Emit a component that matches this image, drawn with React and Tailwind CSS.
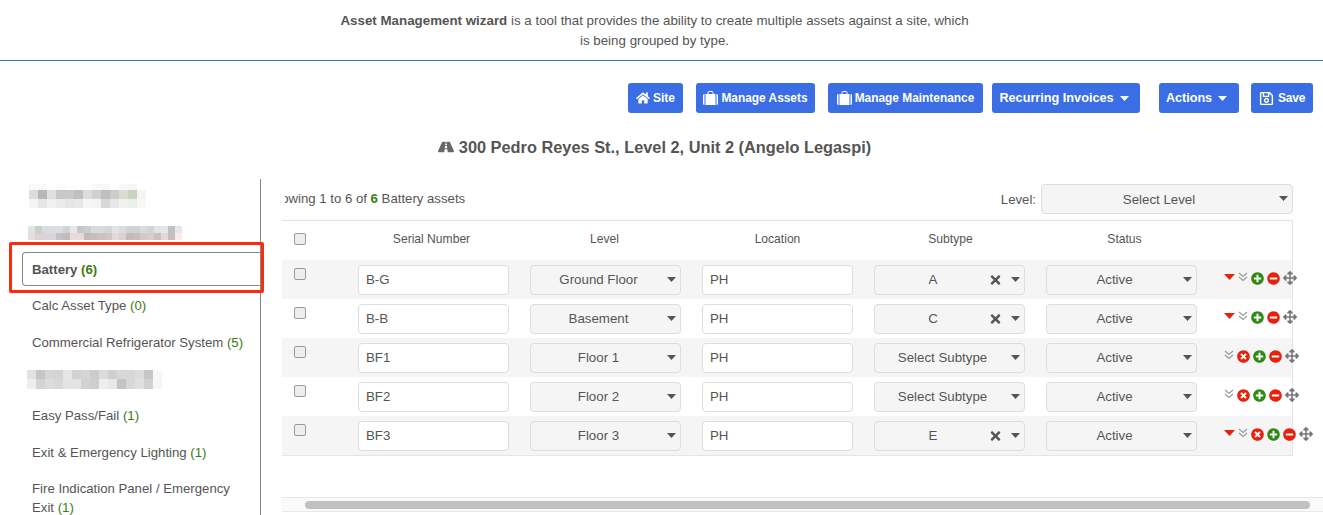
import React from "react";
import { FaHome, FaRegSave, FaRoad, FaPlusCircle, FaMinusCircle, FaTimesCircle, FaArrowsAlt, FaTimes } from "react-icons/fa";

const blurOne = [
  ["bg-[#f9f9f9]", "bg-[#f9f9f9]", "bg-white", "bg-[#fbfbfb]", "bg-white", "bg-white", "bg-white", "bg-[#f9f9f9]", "bg-[#f7f7f7]", "bg-white", "bg-[#f7f7f7]", "bg-[#f7f7f7]", "bg-white"],
  ["bg-[#e0dcdc]", "bg-[#b8b8b8]", "bg-[#e0e0e0]", "bg-[#c8c8c8]", "bg-[#c8c8c8]", "bg-[#bfbfbf]", "bg-[#dcdcdc]", "bg-[#d0d0d0]", "bg-[#c0bec2]", "bg-[#cccccc]", "bg-[#d8dfd0]", "bg-[#c8d4bc]", "bg-[#f4f6f4]"],
  ["bg-[#f5f5f5]", "bg-[#e6e6e6]", "bg-[#f0f0f0]", "bg-[#ebebeb]", "bg-[#e6e6e6]", "bg-[#e8e8e8]", "bg-[#f6f6f6]", "bg-[#f3f3f3]", "bg-[#d8d8d8]", "bg-[#e8e8ec]", "bg-[#f0f2f0]", "bg-[#ecf0ea]", "bg-[#f8f8f8]"],
];

const blurTwo = [
  ["bg-[#e0e4e4]", "bg-[#c8d0d0]", "bg-[#d8dde2]", "bg-[#d8dde2]", "bg-[#d8e0e0]", "bg-[#ccd6d6]", "bg-[#e8e8e8]", "bg-[#c4c8c8]", "bg-[#c6d0d4]", "bg-[#d6dcdc]", "bg-[#d6dcdc]", "bg-[#d0d8d8]", "bg-[#e0e4e4]", "bg-[#d8dcdc]", "bg-[#ccd6d6]", "bg-[#ccd4d4]", "bg-[#d8dcdc]", "bg-[#ced6da]", "bg-[#e0e6e8]", "bg-[#e4e8e8]", "bg-[#bcc4c4]", "bg-[#e0e8ea]"],
  ["bg-[#e8dcdc]", "bg-[#dcd4d4]", "bg-[#d8d4d8]", "bg-[#d8d4d8]", "bg-[#c8c0c0]", "bg-[#c4bcbc]", "bg-[#e8dcdc]", "bg-[#e4dcdc]", "bg-[#c8b8b8]", "bg-[#c8bcbc]", "bg-[#ccc0c0]", "bg-[#d0c4c4]", "bg-[#e4d8d8]", "bg-[#dcd0d0]", "bg-[#c4b8b8]", "bg-[#c8bcbc]", "bg-[#d4c8c8]", "bg-[#d8cccc]", "bg-[#ccc0c0]", "bg-[#e4d8d8]", "bg-[#ccbcbc]", "bg-[#fbeae8]"],
];

const blurThree = [
  ["bg-[#e2e2e2]", "bg-[#c6c6c6]", "bg-[#d6d6d4]", "bg-[#d4d4d4]", "bg-[#e6e6e4]", "bg-[#d2d2d0]", "bg-[#d6d6d6]", "bg-[#cccccc]", "bg-[#dcdce0]", "bg-[#d0d0d0]", "bg-[#d8d8dc]", "bg-[#d8d8d8]", "bg-[#dcdcda]", "bg-[#c6c6c6]", "bg-[#f8f8f8]"],
  ["bg-[#eeeeee]", "bg-[#d4d4d4]", "bg-[#dcdcda]", "bg-[#d8d8d8]", "bg-[#e4e4e4]", "bg-[#e4e4e4]", "bg-[#d2d2d0]", "bg-[#cecece]", "bg-[#eeeef0]", "bg-[#e8e8e6]", "bg-[#c4c4c6]", "bg-[#d8d8d8]", "bg-[#e0e0de]", "bg-[#d0d0d0]", "bg-[#f6f6f8]"],
];

const rows = [
  { serial: "B-G", level: "Ground Floor", subtype: "A", caret: true, remove: false, striped: true },
  { serial: "B-B", level: "Basement", subtype: "C", caret: true, remove: false, striped: false },
  { serial: "BF1", level: "Floor 1", subtype: "", caret: false, remove: true, striped: true },
  { serial: "BF2", level: "Floor 2", subtype: "", caret: false, remove: true, striped: false },
  { serial: "BF3", level: "Floor 3", subtype: "E", caret: true, remove: true, striped: true },
];

const Mosaic = ({ data, cell, height, className }) => (
  <div className={className}>
    {data.map((row, i) => (
      <div key={i} className="flex">
        {row.map((color, j) => (
          <div key={j} className={`${cell} ${height[i]} ${color}`} />
        ))}
      </div>
    ))}
  </div>
);

const Briefcase = () => (
  <svg viewBox="0 0 15 14" className="mr-[3px] h-[14px] w-[15px] shrink-0">
    <path d="M5 3V1.5C5 .8 5.5.5 6 .5h3c.5 0 1 .3 1 1V3" fill="none" stroke="white" strokeWidth="1" />
    <path d="M2.5 3h10v11h-10z M0 4.5C0 3.6.6 3 1.5 3v11C.6 14 0 13.4 0 12.5z M15 4.5c0-.9-.6-1.5-1.5-1.5v11c.9 0 1.5-.6 1.5-1.5z" fill="white" />
  </svg>
);

const SelectBox = ({ value, options, width, padding, clear }) => (
  <div className={`relative h-[30px] ${width}`}>
    <select
      defaultValue={value}
      className={`h-full w-full appearance-none rounded border border-[#ddd] bg-[#f5f5f5] text-[13.3px] text-[#555] [text-align-last:center] ${padding} outline-none`}
    >
      {options.map((o) => (
        <option key={o}>{o}</option>
      ))}
    </select>
    {clear && <FaTimes className="absolute right-[24px] top-[8px] h-[14px] w-[11px] text-[#555]" />}
    <svg viewBox="0 0 9 5" className="absolute right-[5px] top-[12px] h-[5px] w-[9px] fill-[#555]">
      <path d="M0 0h9L4.5 5z" />
    </svg>
  </div>
);

const Button = ({ icon, children, className, caret }) => (
  <button className={`flex h-[30px] items-center justify-center rounded-[3px] bg-[#3b6ee4] font-bold text-white ${className}`}>
    {icon}
    {children}
    {caret && (
      <svg viewBox="0 0 9 5" className="ml-[6px] h-[5px] w-[9px] fill-white">
        <path d="M0 0h9L4.5 5z" />
      </svg>
    )}
  </button>
);

const SideItem = ({ name, count, className = "" }) => (
  <div className={`flex h-[34px] items-center pl-[32px] text-[#555] ${className}`}>
    <span>
      {name} <span className="text-[#3c7a12]">({count})</span>
    </span>
  </div>
);

export default function App() {
  return (
    <div className="h-[515px] w-[1323px] overflow-hidden bg-white font-['Liberation_Sans',sans-serif] text-[13.2px] leading-[19px] text-[#555]">
      <header className="h-[61px] border-b border-[#337ab7] pr-[14px] pt-[11px] text-center text-[13.35px] leading-[20px]">
        <p className="mx-auto w-[640px]">
          <b>Asset Management wizard</b> is a tool that provides the ability to create multiple assets against a site, which
          <br />
          is being grouped by type.
        </p>
      </header>

      <div className="flex pl-[628px] pt-[22px]">
        <Button className="w-[55px] text-[12px]" icon={<FaHome className="mr-[3px] text-[14px]" />}>Site</Button>
        <Button className="ml-[13px] w-[119px] text-[11.9px]" icon={<Briefcase />}>Manage Assets</Button>
        <Button className="ml-[13px] w-[155px] text-[11.9px]" icon={<Briefcase />}>Manage Maintenance</Button>
        <Button className="ml-[9px] w-[148px] pr-[4px] text-[12.7px]" caret>Recurring Invoices</Button>
        <Button className="ml-[19px] w-[80px] pr-[5px] text-[12.6px]" caret>Actions</Button>
        <Button className="ml-[12px] w-[62px] text-[12px] tracking-[-0.2px]" icon={<FaRegSave className="mr-[4px] text-[15px]" />}>Save</Button>
      </div>

      <h2 className="mt-[24px] flex h-[20px] items-center justify-center pr-[14px] text-[16.35px] font-bold leading-[20px]">
        <FaRoad className="mr-[5px] text-[16px] text-[#666]" />
        300 Pedro Reyes St., Level 2, Unit 2 (Angelo Legaspi)
      </h2>

      <div className="mt-[22px] flex">
        <aside className="relative h-[336px] w-[261px] shrink-0 border-r border-[#888]">
          <Mosaic data={blurOne} cell="w-[9px]" height={["h-[6px]", "h-[9px]", "h-[9px]"]} className="ml-[29px] mt-[5px]" />
          <Mosaic data={blurTwo} cell="w-[7px]" height={["h-[7px]", "h-[7px]"]} className="ml-[28px] mt-[18px]" />
          <div className="ml-[22px] mt-[12px] flex h-[34px] items-center rounded-l border border-r-0 border-[#888] pl-[9px] font-bold text-[#555]">
            <span>
              Battery <span className="text-[#3c7a12]">(6)</span>
            </span>
          </div>
          <SideItem name="Calc Asset Type" count={0} className="mt-[2px]" />
          <SideItem name="Commercial Refrigerator System" count={5} className="mt-[3px]" />
          <Mosaic data={blurThree} cell="w-[9px]" height={["h-[9px]", "h-[10px]"]} className="ml-[27px] mt-[11px]" />
          <SideItem name="Easy Pass/Fail" count={1} className="mt-[9px]" />
          <SideItem name="Exit & Emergency Lighting" count={1} className="mt-[3px]" />
          <div className="mt-[10px] pl-[32px] pr-[20px]">
            Fire Indication Panel / Emergency Exit <span className="text-[#3c7a12]">(1)</span>
          </div>
          <div className="absolute left-[9px] top-[63px] h-[51px] w-[255px] rounded-[2px] border-[3px] border-[#fb2c0e]" />
        </aside>

        <main className="ml-[21px] min-w-0 flex-1">
          <div className="flex h-[42px] w-[1011px] items-center border-b border-[#e5e5e5] pb-[1px]">
            <div className="ml-[3px] w-[182px] shrink-0 overflow-hidden pb-[2px]">
              <div className="ml-[-20px] whitespace-nowrap">
                Showing 1 to 6 of <b className="text-[#3c7a12]">6</b> Battery assets
              </div>
            </div>
            <span className="ml-auto mr-[5px]">Level:</span>
            <SelectBox value="Select Level" options={["Select Level"]} width="w-[252px]" padding="pr-[16px]" />
          </div>

          <div className="w-[1011px] border-b border-r border-[#e5e5e5]">
            <div className="grid h-[39px] grid-cols-[55px_151px_151px_151px_151px_151px] items-center gap-x-[21px] pb-[3px] text-center text-[12.1px]">
              <input type="checkbox" className="ml-[12px] h-[12px] w-[12px] appearance-none rounded-[2px] border border-[#999] bg-[#eee]" />
              <span className="pr-[4px]">Serial Number</span>
              <span className="pr-[2px]">Level</span>
              <span>Location</span>
              <span className="pl-[2px]">Subtype</span>
              <span className="pl-[6px]">Status</span>
            </div>
            {rows.map((r) => (
              <div
                key={r.serial}
                className={`grid h-[39px] grid-cols-[55px_151px_151px_151px_151px_151px_1fr] items-center gap-x-[21px] ${r.striped ? "bg-[#f5f5f5]" : "bg-white"}`}
              >
                <input type="checkbox" className="mb-[12px] ml-[12px] h-[12px] w-[12px] appearance-none rounded-[2px] border border-[#999] bg-[#eee]" />
                <input defaultValue={r.serial} className="h-[30px] w-full rounded border border-[#ddd] bg-white px-[7px] text-[13.3px] text-[#555] outline-none" />
                <SelectBox value={r.level} options={[r.level]} width="w-full" padding="pr-[14px]" />
                <input defaultValue="PH" className="h-[30px] w-full rounded border border-[#ddd] bg-white px-[7px] text-[13.3px] text-[#555] outline-none" />
                {r.subtype ? (
                  <SelectBox value={r.subtype} options={[r.subtype]} width="w-full" padding="pr-[33px]" clear />
                ) : (
                  <SelectBox value="Select Subtype" options={["Select Subtype"]} width="w-full" padding="pr-[14px]" />
                )}
                <SelectBox value="Active" options={["Active"]} width="w-full" padding="pr-[14px]" />
                <div className="mb-[3px] flex items-center gap-[3px] pl-[6px]">
                  {r.caret && (
                    <svg viewBox="0 0 11 6" className="mb-[3px] h-[6px] w-[11px] shrink-0 fill-[#e8210c]">
                      <path d="M0 0h11L5.5 6z" />
                    </svg>
                  )}
                  <svg viewBox="0 0 10 10" className="mb-[2px] h-[10px] w-[10px] shrink-0 fill-none stroke-[#999]" strokeWidth="1.2">
                    <path d="M1 1l4 3.5L9 1M1 5l4 3.5L9 5" />
                  </svg>
                  {r.remove && <FaTimesCircle className="h-[13px] w-[13px] shrink-0 text-[#e8210c]" />}
                  <FaPlusCircle className="h-[13px] w-[13px] shrink-0 text-[#2f8a12]" />
                  <FaMinusCircle className="h-[13px] w-[13px] shrink-0 text-[#e8210c]" />
                  <FaArrowsAlt className="h-[14px] w-[14px] shrink-0 text-[#777]" />
                </div>
              </div>
            ))}
          </div>

          <div className="mt-[41px] flex h-[15px] w-[1041px] items-center border-y border-[#e8e8e8] bg-[#fafafa] pl-[23px] pr-[13px]">
            <div className="h-[8px] w-full rounded-full bg-[#c1c1c1]" />
          </div>
        </main>
      </div>
    </div>
  );
}
